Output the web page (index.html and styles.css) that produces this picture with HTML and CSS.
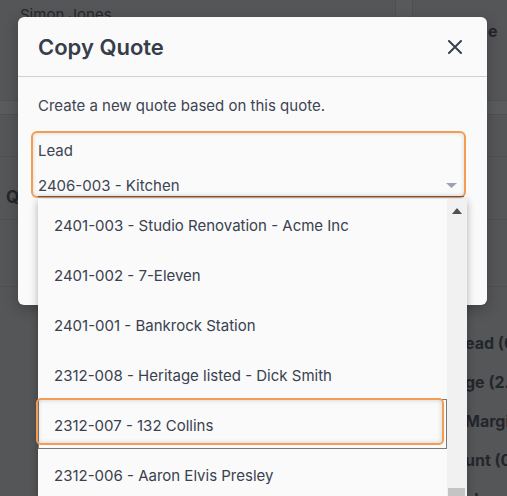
FILE: index.html
```html
<!DOCTYPE html>
<html>
<head>
<meta charset="utf-8">
<link rel="stylesheet" href="styles.css">
</head>
<body>
<div class="page">
  <div class="bg-top">
    <div class="bg-name">Simon Jones</div>
    <div class="bg-col"></div>
    <div class="bg-right">e</div>
  </div>
  <div class="bg-band"></div>
  <div class="bg-sec"></div>
  <div class="bg-qrow"><span class="bg-q">Q</span></div>
  <div class="bg-mid"></div>
  <div class="bg-labels">
    <div class="bg-label">ead (0</div>
    <div class="bg-label">ge (2.</div>
    <div class="bg-label">Margi</div>
    <div class="bg-label">unt (0</div>
    <div class="bg-label">al</div>
  </div>
</div>

<div class="modal">
  <div class="modal-header">
    <h2 class="modal-title">Copy Quote</h2>
    <svg class="close" width="14" height="14" viewBox="0 0 14 14"><path d="M1 1L13 13M13 1L1 13" stroke="#374151" stroke-width="2" stroke-linecap="round"/></svg>
  </div>
  <div class="modal-body">
    <p class="intro">Create a new quote based on this quote.</p>
    <div class="field">
      <div class="field-label">Lead</div>
      <div class="field-value">
        <span>2406-003 - Kitchen</span>
        <svg class="caret" width="11" height="5" viewBox="0 0 11 5"><path d="M0 0H11L5.5 5Z" fill="#9ca3af"/></svg>
      </div>
    </div>
  </div>
</div>

<div class="dropdown">
  <div class="options">
    <div class="opt">2401-003 - Studio Renovation - Acme Inc</div>
    <div class="opt">2401-002 - 7-Eleven</div>
    <div class="opt">2401-001 - Bankrock Station</div>
    <div class="opt">2312-008 - Heritage listed - Dick Smith</div>
    <div class="opt opt-active">2312-007 - 132 Collins</div>
    <div class="opt">2312-006 - Aaron Elvis Presley</div>
  </div>
  <div class="scrollbar">
    <svg class="sb-up" width="10" height="6" viewBox="0 0 10 6"><path d="M0 6H10L5 0Z" fill="#505050"/></svg>
    <div class="sb-thumb"></div>
  </div>
</div>
</body>
</html>
```

FILE: styles.css
```css
* { box-sizing: border-box; }
html, body { margin: 0; padding: 0; }
body {
  width: 507px;
  height: 496px;
  overflow: hidden;
  background: #555658;
  font-family: Inter, "Noto Sans", sans-serif;
  position: relative;
}
.page { width: 507px; height: 496px; overflow: hidden; }
.bg-top {
  height: 100px;
  display: flex;
}
.bg-name {
  padding: 5px 0 0 20px;
  font-size: 15px;
  color: #25282d;
  width: 395px;
}
.bg-col {
  width: 18px;
  border-left: 1px solid #4e4f51;
  border-right: 1px solid #4e4f51;
  background: #58595b;
}
.bg-right {
  flex: 1;
  padding: 21px 0 0 75px;
  font-size: 16px;
  font-weight: 700;
  color: #23262b;
}
.bg-band {
  height: 15px;
  border-top: 1px solid #4f5052;
  border-bottom: 1px solid #4f5052;
  background: #5a5b5d;
}
.bg-sec {
  height: 42px;
  border-bottom: 1px solid #4f5052;
}
.bg-qrow {
  height: 63px;
  border-bottom: 1px solid #4f5052;
  padding: 30px 0 0 6px;
}
.bg-q {
  font-size: 17px;
  font-weight: 700;
  color: #23262b;
}
.bg-mid {
  height: 67px;
  border-bottom: 1px solid #4f5052;
}
.bg-labels {
  display: flex;
  flex-direction: column;
  padding: 46px 0 0 465px;
  white-space: nowrap;
}
.bg-label {
  height: 39px;
  font-size: 16px;
  font-weight: 700;
  color: #23262b;
}

.modal {
  position: absolute;
  left: 18px;
  top: 17px;
  width: 469px;
  height: 288px;
  background: #fafafa;
  border-radius: 6px;
  box-shadow: 0 4px 14px rgba(0,0,0,0.25);
}
.modal-header {
  height: 60px;
  border-bottom: 1px solid #d0d0d0;
  display: flex;
  align-items: center;
  justify-content: space-between;
  padding: 0 25px 0 20px;
}
.modal-title {
  margin: 0;
  font-size: 22px;
  font-weight: 600;
  color: #363d4b;
  padding-top: 1px;
}
.close { display: block; margin-top: 1px; }
.modal-body { padding: 19px 0 0 13px; }
.intro {
  margin: 0 0 0 7px;
  font-size: 15px;
  line-height: 20px;
  color: #3d4452;
}
.field {
  margin-top: 15px;
  width: 435px;
  height: 67px;
  border: 2px solid #f39c52;
  border-radius: 6px;
  padding: 8px 0 0 5px;
  box-shadow: inset 0 0 4px rgba(0,0,0,0.14);
}
.field-label {
  font-size: 15px;
  line-height: 20px;
  color: #3d4452;
}
.field-value {
  margin-top: 13px;
  height: 23px;
  display: flex;
  align-items: center;
  justify-content: space-between;
  border-bottom: 1.5px solid #5f6166;
  font-size: 15px;
  color: #3d4452;
  padding-right: 7px;
}
.caret { display: block; margin-top: 1px; }

.dropdown {
  position: absolute;
  left: 38px;
  top: 199px;
  width: 429px;
  height: 297px;
  background: #fafafa;
  box-shadow: 0 2px 8px rgba(0,0,0,0.3);
  display: flex;
}
.options { width: 409px; }
.opt {
  height: 50px;
  display: flex;
  align-items: center;
  padding-left: 16px;
  font-size: 15px;
  color: #39414f;
  padding-top: 2px;
}
.opt-active {
  position: relative;
  border: 1px solid #7a7a7a;
  padding-left: 15px;
}
.opt-active::before {
  content: "";
  position: absolute;
  left: -3px;
  top: -2px;
  right: 2px;
  bottom: 3px;
  border: 2px solid #f39c52;
  border-radius: 5px;
  box-shadow: inset 0 0 5px rgba(0,0,0,0.18);
}
.scrollbar {
  width: 20px;
  background: #f1f1f1;
  position: relative;
}
.sb-up { position: absolute; left: 5px; top: 9px; }
.sb-thumb {
  position: absolute;
  left: 1px;
  top: 289px;
  width: 17px;
  height: 20px;
  background: #c4c4c4;
}
```
